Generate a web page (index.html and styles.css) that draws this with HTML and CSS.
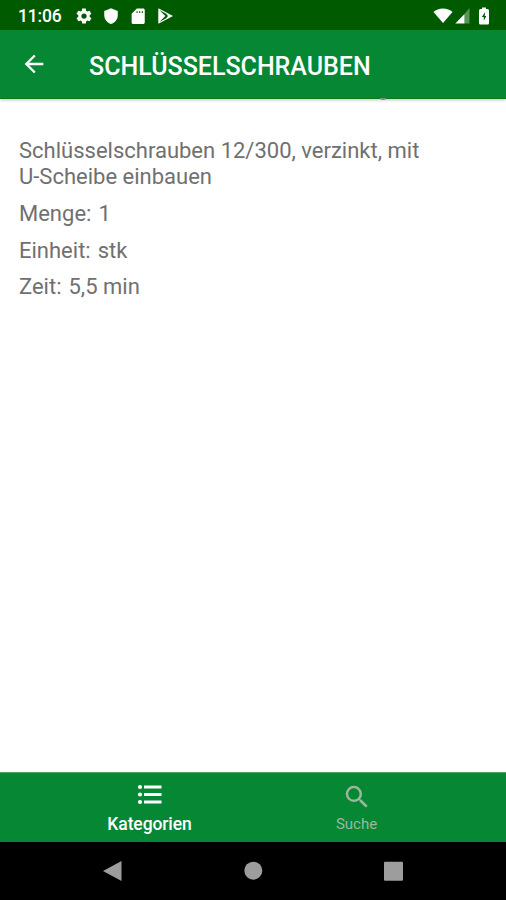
FILE: index.html
```
<!DOCTYPE html>
<html lang="de">
<head>
  <meta charset="UTF-8" />
  <meta name="viewport" content="width=device-width, initial-scale=1.0"/>
  <title>Schlüsselschrauben</title>
  <link rel="stylesheet" href="styles.css">
</head>
<body>

  <!-- Status bar -->
  <div class="status-bar">
    <span class="clock">11:06</span>
    <div class="status-icons">
      <svg width="18" height="18" viewBox="0 0 24 24"><path d="M19.4 13c0-.3.1-.6.1-1s0-.7-.1-1l2.1-1.600c.2-.1.2-.4.1-.6l-2-3.500c-.1-.2-.4-.3-.6-.2l-2.500 1c-.5-.4-1.100-.7-1.700-1l-.4-2.600c0-.2-.2-.4-.5-.4h-4c-.2 0-.5.2-.5.4l-.4 2.600c-.6.300-1.200.6-1.700 1l-2.500-1c-.2-.1-.5 0-.6.2l-2 3.500c-.1.200-.1.500.1.600L4.500 11c0 .3-.1.700-.1 1s0 .7.1 1l-2.100 1.600c-.2.200-.2.400-.1.600l2 3.500c.1.200.4.300.6.200l2.500-1c.5.400 1.100.7 1.700 1l.4 2.600c0 .3.200.5.500.5h4c.3 0 .5-.2.500-.5l.4-2.600c.6-.3 1.200-.6 1.700-1l2.500 1c.2.100.5 0 .6-.2l2-3.500c.1-.2.100-.4-.1-.6L19.400 13zM12 15.500a3.500 3.500 0 1 1 0-7 3.500 3.500 0 0 1 0 7z"/></svg>
      <svg width="18" height="18" viewBox="0 0 24 24"><path d="M12 1.500L3 5.200V11c0 5.400 3.800 10.300 9 11.500 5.200-1.200 9-6.100 9-11.500V5.200z"/></svg>
      <svg width="18" height="18" viewBox="0 0 24 24"><path fill-rule="evenodd" d="M19 2h-8.500L3.500 9v11.500c0 1.100.9 2 2 2H19c1.100 0 2-.9 2-2V4c0-1.100-.9-2-2-2zM10 5.500h1.500V8H10zm3.500 0H15V8h-1.500zm3.500 0h1.500V8H17z"/></svg>
      <svg width="18" height="18" viewBox="0 0 24 24"><path class="play-line" d="M4 3v18L21 12z"/><path d="M3.500 3v18l9-9zM13 8.500l8 3.500-8 3.500 3-3.500z"/></svg>
    </div>
    <div class="signal-icons">
      <svg width="20" height="16" viewBox="0 0 20 16"><path d="M10 15L.5 4C3 1.800 6.200.4 10 .4s7 1.400 9.500 3.600z"/></svg>
      <svg width="16" height="16" viewBox="0 0 16 16"><path class="faded" d="M14.500 0v15.500H9.500V6z"/><path d="M9.500 6v9.500H.3z"/></svg>
      <svg class="battery" width="12" height="18" viewBox="0 0 12 18"><path fill-rule="evenodd" d="M4 .5h4V2h1.500q1.500 0 1.500 1.500V16q0 1.500-1.500 1.500h-7Q1 17.500 1 16V3.500Q1 2 2.500 2H4zM7.200 5L3.800 10h2v3.800L8.300 9H6.700z"/></svg>
    </div>
  </div>

  <header class="app-bar">
    <svg class="back" width="28" height="28" viewBox="0 0 24 24"><path d="M20 11H7.830l5.590-5.590L12 4l-8 8 8 8 1.410-1.410L7.830 13H20v-2z"/></svg>
    <h1>SCHLÜSSELSCHRAUBEN</h1>
  </header>

  <main class="details">
    <p>Schlüsselschrauben 12/300, verzinkt, mit<br>U-Scheibe einbauen</p>
    <p><span class="label">Menge:</span>1</p>
    <p><span class="label">Einheit:</span>stk</p>
    <p><span class="label">Zeit:</span>5,5 min</p>
  </main>

  <nav class="tabs">
    <a class="tab active">
      <svg width="30" height="28" viewBox="0 0 30 28"><path d="M9 3.500h17.500v3H9zM9 11h17.500v3H9zM9 18.500h17.500v3H9z"/><circle cx="5" cy="5" r="2.100"/><circle cx="5" cy="12.500" r="2.100"/><circle cx="5" cy="20" r="2.100"/></svg>
      <span>Kategorien</span>
    </a>
    <a class="tab">
      <svg width="30" height="30" viewBox="0 0 24 24"><path d="M15.500 14h-.79l-.28-.27A6.471 6.471 0 0 0 16 9.500 6.500 6.500 0 1 0 9.500 16c1.610 0 3.090-.59 4.230-1.570l.27.280v.790l5 4.990L20.490 19l-4.990-5zm-6 0C7.010 14 5 11.990 5 9.500S7.010 5 9.500 5 14 7.010 14 9.500 11.990 14 9.500 14z"/></svg>
      <span>Suche</span>
    </a>
  </nav>

  <!-- System buttons -->
  <div class="system-nav">
    <svg width="22" height="22" viewBox="0 0 22 22"><path d="M1 11L19.500 1v20z"/></svg>
    <svg width="22" height="22" viewBox="0 0 22 22"><circle cx="11.300" cy="10.700" r="9"/></svg>
    <svg width="22" height="22" viewBox="0 0 22 22"><rect x="2" y="1.700" width="19" height="19" rx="1"/></svg>
  </div>

</body>
</html>
```
FILE: styles.css
```
:root {
  --primary-color: #058734;
  --status-color: #005a00;
  --text-color: #707070;
  --inactive-color: #9bb89d;
}

body {
  margin: 0;
  height: 100vh;
  display: flex;
  flex-direction: column;
  overflow: hidden;
  font-family: Roboto, "Liberation Sans", sans-serif;
  background: #fff;
  color: var(--text-color);
}

svg {
  display: block;
  fill: currentColor;
}

.status-bar {
  height: 30px;
  box-sizing: border-box;
  padding: 1px 16px 0 18px;
  display: flex;
  align-items: center;
  background: var(--status-color);
  color: #fff;
}

.clock {
  width: 57px;
  font-size: 17.5px;
  font-weight: 500;
  letter-spacing: -0.15px;
  white-space: nowrap;
}

.status-icons {
  display: flex;
  gap: 9px;
}

.play-line {
  fill: none;
  stroke: currentColor;
  stroke-width: 1.5;
}

.signal-icons {
  margin-left: auto;
  display: flex;
  align-items: center;
  gap: 2px;
}

.faded {
  opacity: 0.35;
}

.battery {
  margin-left: 5px;
}

.app-bar {
  height: 69px;
  box-sizing: border-box;
  padding: 0 20px;
  display: flex;
  align-items: center;
  background: var(--primary-color);
  border-bottom: 1px solid #087a1c;
  box-shadow: 0 1px 3px rgba(0, 0, 0, 0.25);
  color: #fff;
}

.app-bar h1 {
  margin: 5px 0 0 41px;
  font-size: 25px;
  font-weight: 500;
  white-space: nowrap;
}

/* end of the scrolled-out line, just under the app bar */
.app-bar::after {
  content: "";
  width: 6px;
  height: 2px;
  margin: 0 0 -2px 9px;
  align-self: flex-end;
  border-radius: 0 0 3px 3px;
  background: #76947c;
}

.details {
  flex: 1;
  padding: 39px 19px 0;
}

.details p {
  margin: 0 0 10.800px;
  font-size: 22px;
  line-height: 26px;
  white-space: nowrap;
}

.label {
  margin-right: 7px;
}

.tabs {
  height: 70px;
  box-sizing: border-box;
  padding: 0 46px;
  display: flex;
  background: var(--primary-color);
  border-top: 1px solid #4fa568;
}

.tab {
  flex: 1;
  display: flex;
  flex-direction: column;
  align-items: center;
  justify-content: space-between;
  padding: 9px 0 8px;
  font-size: 15px;
  line-height: 20px;
  color: var(--inactive-color);
}

.tab.active {
  font-size: 17.5px;
  font-weight: 500;
  letter-spacing: -0.1px;
  color: #fff;
}

.system-nav {
  height: 58px;
  padding: 0 43px;
  display: flex;
  align-items: center;
  justify-content: space-around;
  background: #000;
  color: #9d9d9d;
}
```
